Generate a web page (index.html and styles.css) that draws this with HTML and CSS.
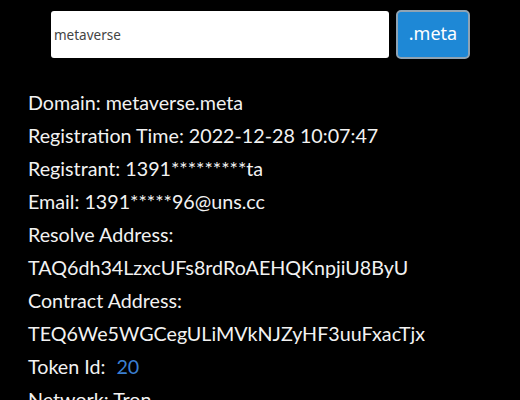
FILE: index.html
```html
<!DOCTYPE html>
<html lang="en">
<head>
    <meta charset="UTF-8">
    <meta name="viewport" content="width=device-width, initial-scale=1.0">
    <title>Domain Info</title>
    <link rel="stylesheet" href="styles.css">
</head>
<body>
    <div class="search-bar">
        <input type="text" class="search-input" value="metaverse">
        <button class="btn-suffix">.meta</button>
    </div>
    <div class="info">
        <p>Domain: metaverse.meta</p>
        <p>Registration Time: 2022-12-28 10:07:47</p>
        <p>Registrant: 1391*********ta</p>
        <p>Email: 1391*****96@uns.cc</p>
        <p>Resolve Address:</p>
        <p>TAQ6dh34LzxcUFs8rdRoAEHQKnpjiU8ByU</p>
        <p>Contract Address:</p>
        <p>TEQ6We5WGCegULiMVkNJZyHF3uuFxacTjx</p>
        <p>Token Id: <span class="token">20</span></p>
        <p>Network: Tron</p>
    </div>
</body>
</html>
```

FILE: styles.css
```css
/* General */
body {
    font-family: 'Lato', sans-serif;
    margin: 0;
    padding: 0;
    background: #000;
    color: #f2f2f2;
}

/* Search */
.search-bar {
    display: flex;
    align-items: center;
    gap: 7px;
    padding: 10px 0 0 51px;
}

.search-input {
    width: 338px;
    height: 47px;
    box-sizing: border-box;
    padding: 0 3px;
    font-family: 'Noto Sans', sans-serif;
    font-size: 13.5px;
    color: #444;
    background: #fff;
    border: none;
    border-radius: 3px;
}

.btn-suffix {
    width: 74px;
    height: 49px;
    box-sizing: border-box;
    padding: 0 0 4px;
    font-family: 'Noto Sans', sans-serif;
    font-size: 18px;
    color: #fff;
    background: #1e88d6;
    border: 2px solid #8fa3b3;
    border-radius: 5px;
}

/* Info */
.info {
    padding: 27px 28px 0;
}

.info p {
    margin: 0;
    font-size: 19.7px;
    line-height: 33px;
}

.token {
    margin-left: 6px;
    color: #3b7fd0;
}
```
